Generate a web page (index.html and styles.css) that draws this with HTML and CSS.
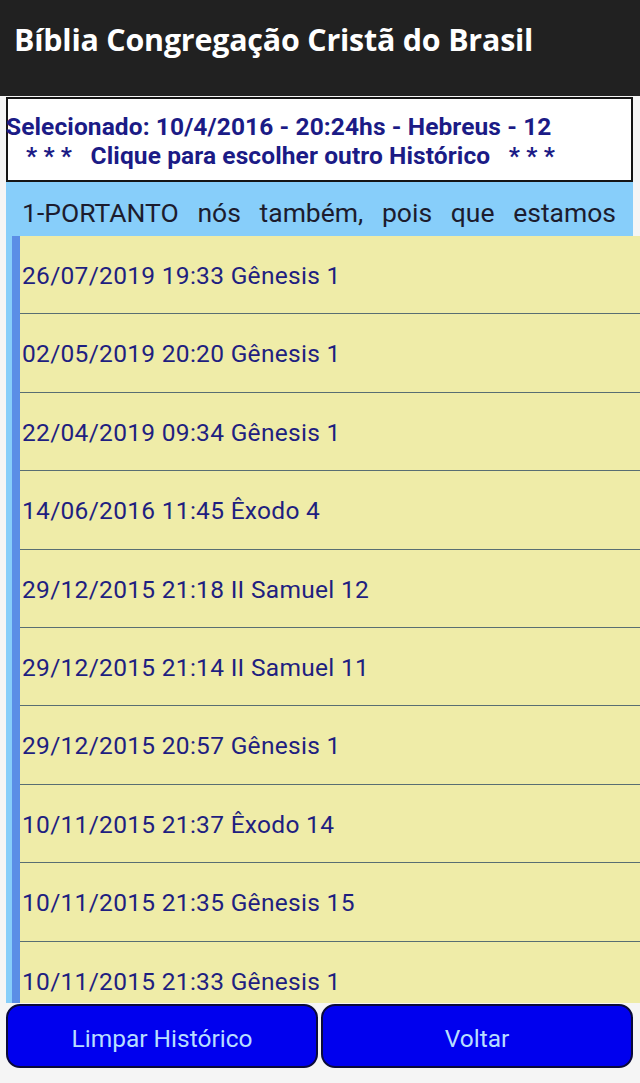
FILE: index.html
```html
<!DOCTYPE html>
<html>
<head>
  <meta charset="utf-8">
  <title>Bíblia Congregação Cristã do Brasil</title>
  <link rel="stylesheet" href="styles.css">
</head>
<body>
  <header class="appbar">
    <h1 class="appbar-title">Bíblia Congregação Cristã do Brasil</h1>
  </header>

  <main class="page">
    <div class="selected-box">
      <div class="selected-line">Selecionado: 10/4/2016 - 20:24hs - Hebreus - 12</div>
      <div class="selected-hint">* * *&nbsp;&nbsp; Clique para escolher outro Histórico &nbsp;&nbsp;* * *</div>
    </div>

    <div class="verse-area">
      <p class="verse">1-PORTANTO nós também, pois que estamos</p>

      <ul class="history-list">
        <li class="history-item">26/07/2019 19:33 Gênesis 1</li>
        <li class="history-item">02/05/2019 20:20 Gênesis 1</li>
        <li class="history-item">22/04/2019 09:34 Gênesis 1</li>
        <li class="history-item">14/06/2016 11:45 Êxodo 4</li>
        <li class="history-item">29/12/2015 21:18 II Samuel 12</li>
        <li class="history-item">29/12/2015 21:14 II Samuel 11</li>
        <li class="history-item">29/12/2015 20:57 Gênesis 1</li>
        <li class="history-item">10/11/2015 21:37 Êxodo 14</li>
        <li class="history-item">10/11/2015 21:35 Gênesis 15</li>
        <li class="history-item">10/11/2015 21:33 Gênesis 1</li>
      </ul>
    </div>

    <div class="actions">
      <button class="action-btn" id="clearHistoryButton">Limpar Histórico</button>
      <button class="action-btn" id="backButton">Voltar</button>
    </div>
  </main>
</body>
</html>
```

FILE: styles.css
```css
body {
  margin: 0;
  background-color: #f5f5f5;
  font-family: Roboto, "Liberation Sans", sans-serif;
}

/* Top bar */
.appbar {
  height: 96px;
  background-color: #212121;
  box-sizing: border-box;
  padding: 20px 0 0 14px;
}

.appbar-title {
  margin: 0;
  color: #ffffff;
  font-family: "Open Sans", "DejaVu Sans", sans-serif;
  font-weight: 700;
  font-size: 30.4px;
  letter-spacing: -0.2px;
  line-height: 40px;
}

.page {
  padding: 1px 7px 0 6px;
}

/* Selected history box */
.selected-box {
  height: 85px;
  box-sizing: border-box;
  background-color: #ffffff;
  border: 2px solid #151515;
  color: #1b1b86;
  font-weight: 700;
  font-size: 24.5px;
  line-height: 29px;
  padding-top: 13px;
}

.selected-line {
  margin-left: -2px;
  letter-spacing: 0.1px;
}

.selected-hint {
  padding-left: 18px;
  letter-spacing: 0.1px;
}

/* Verse + history */
.verse-area {
  background-color: #87cefa;
  height: 821px;
}

.verse {
  margin: 0;
  height: 54px;
  padding: 0 17px 0 16px;
  color: #1c1c2e;
  font-size: 26.5px;
  line-height: 62px;
  text-align: justify;
  text-align-last: justify;
  white-space: nowrap;
  overflow: hidden;
}

.history-list {
  list-style: none;
  margin: 0 -7px 0 6px;
  padding: 0;
  height: 767px;
  overflow: hidden;
  background-color: #efeca8;
  border-left: 8px solid #5b8ee6;
}

.history-item {
  height: 77.4px;
  border-bottom: 1px solid #596e72;
  color: #1f1f80;
  font-size: 24.5px;
  letter-spacing: 0.3px;
  line-height: 80px;
  padding-left: 2px;
}

/* Bottom buttons */
.actions {
  display: flex;
  gap: 3px;
  margin-top: 1px;
}

.action-btn {
  flex: 1;
  height: 64px;
  background-color: #0000ee;
  color: #b8deff;
  border: 2px solid #0a0a3a;
  border-radius: 14px;
  font-family: Roboto, "Liberation Sans", sans-serif;
  font-size: 24.5px;
  padding-top: 6px;
  cursor: pointer;
}
```
